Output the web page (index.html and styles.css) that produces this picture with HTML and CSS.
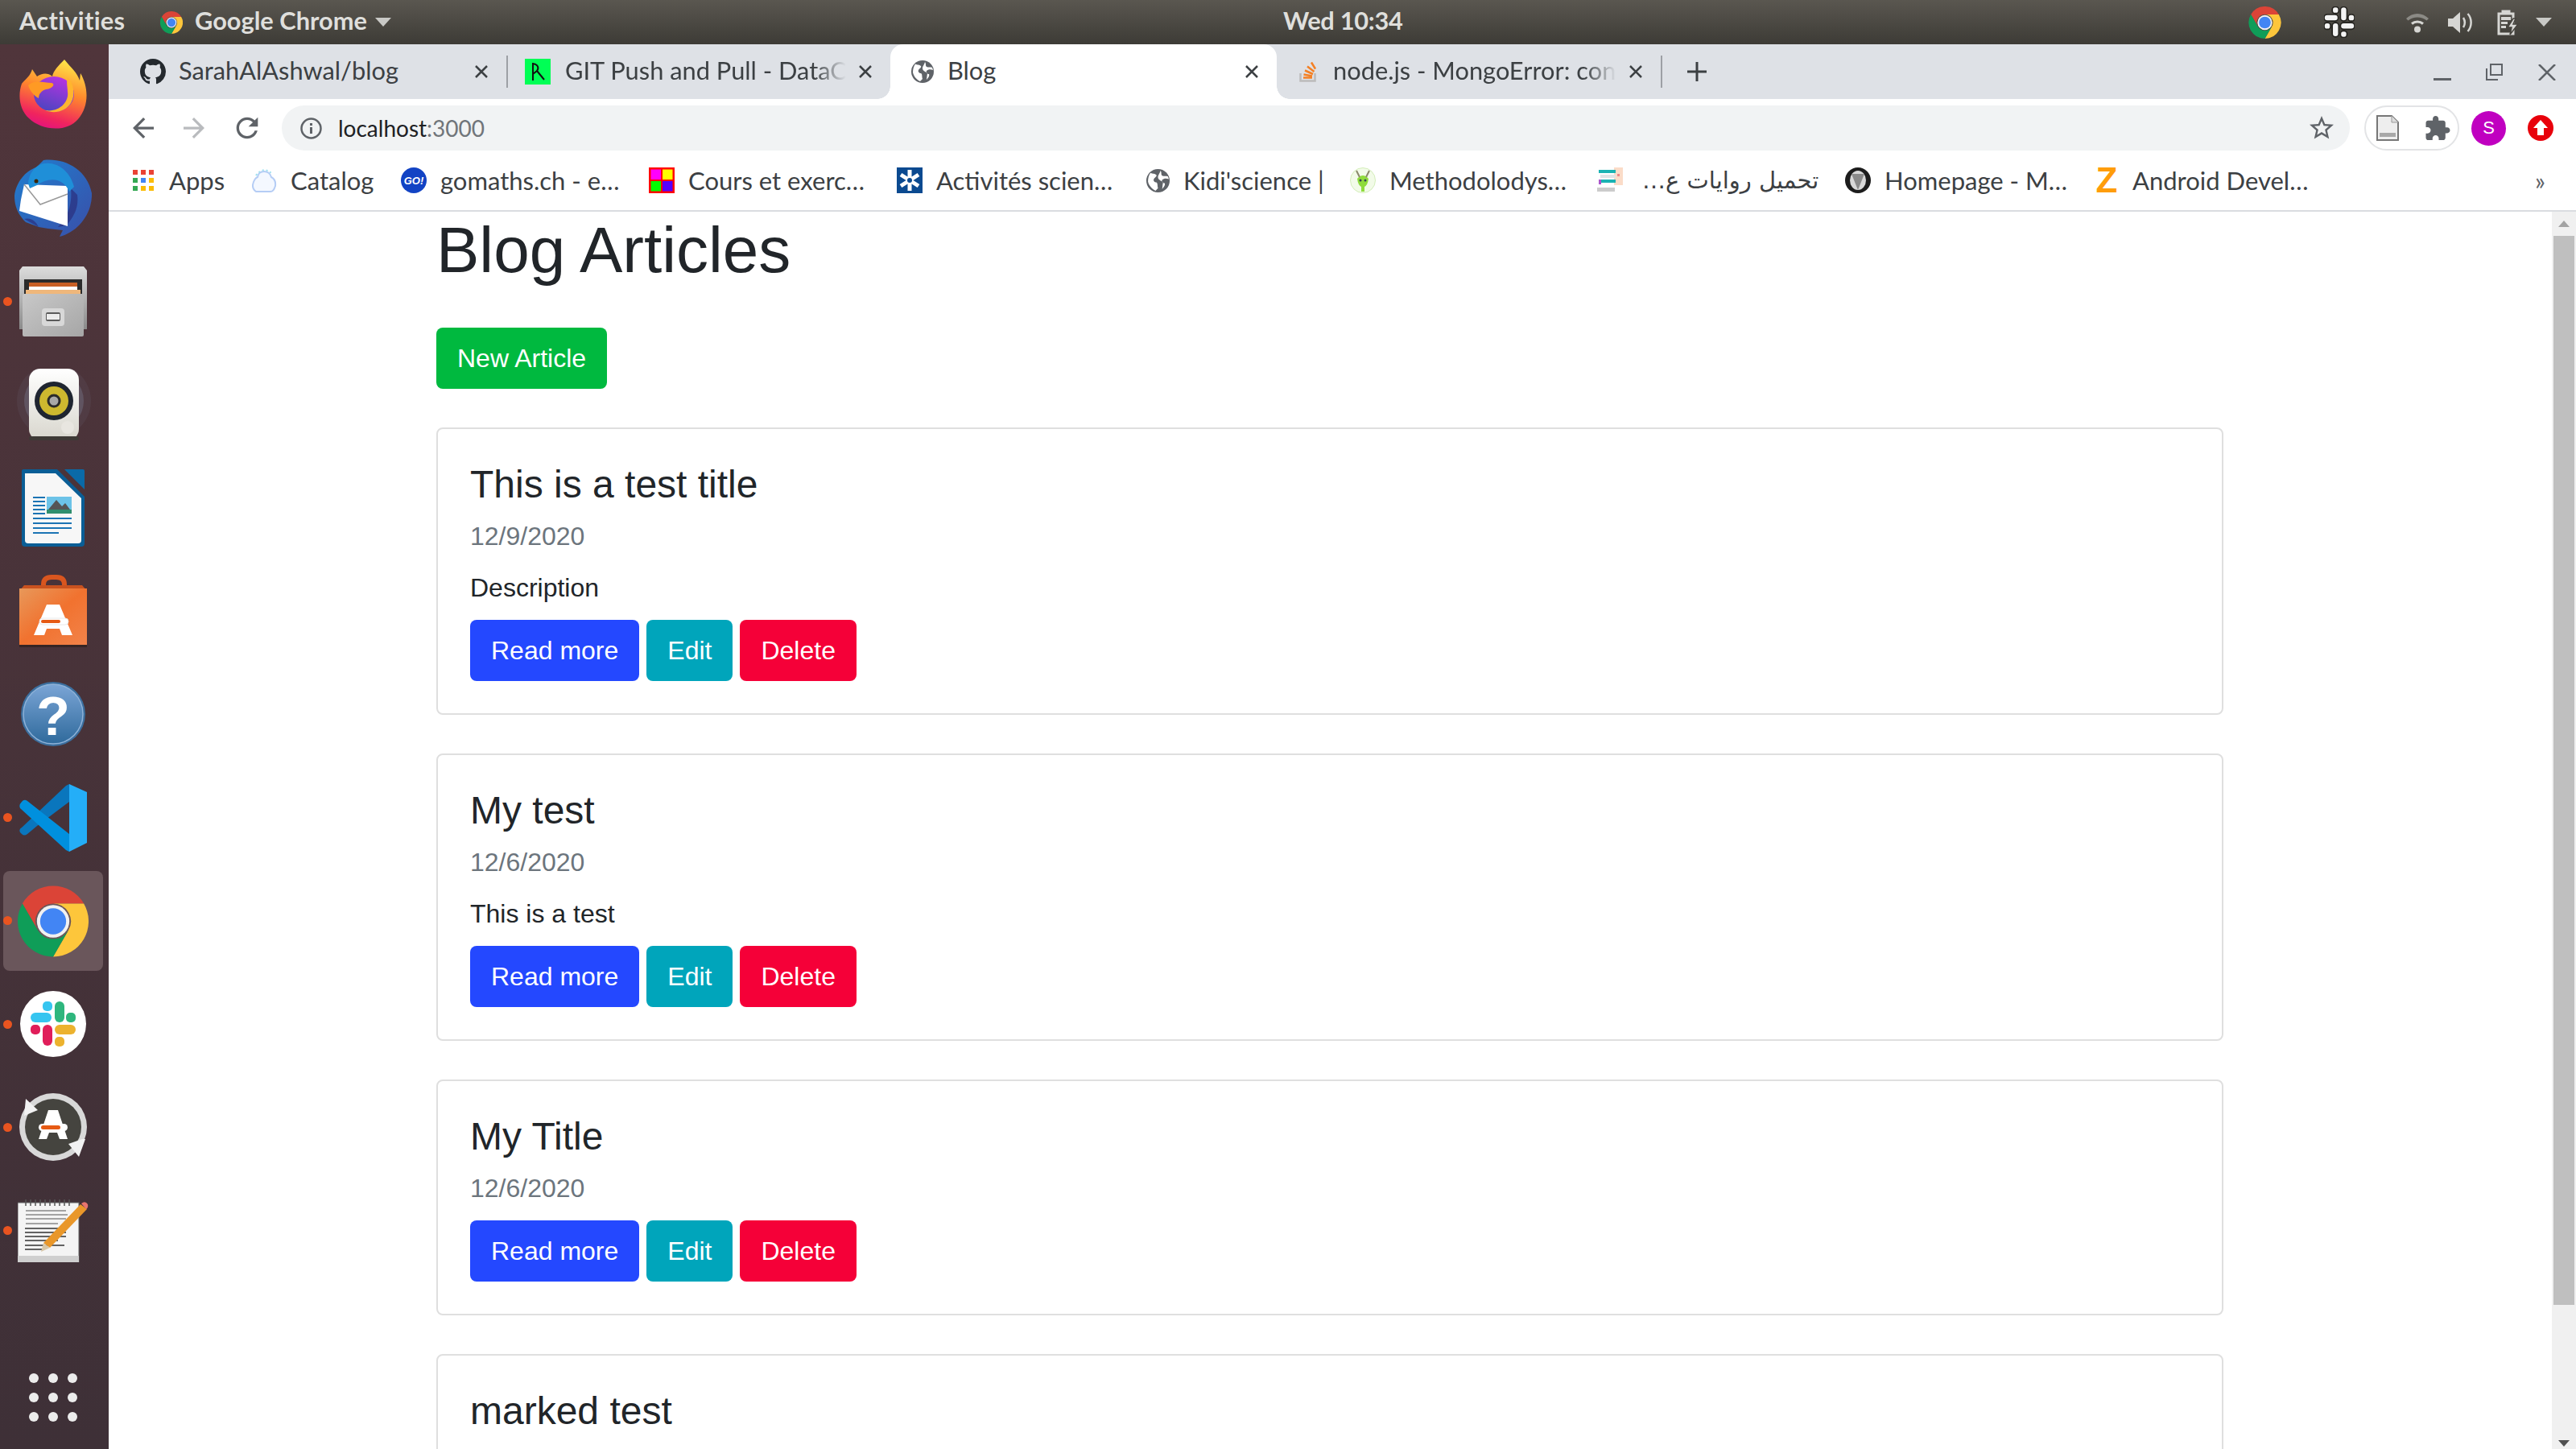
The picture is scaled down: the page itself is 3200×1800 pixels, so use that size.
FILE: index.html
```html
<!DOCTYPE html>
<html lang="en">
<head>
<meta charset="utf-8">
<title>Blog</title>
<link rel="stylesheet" href="styles.css">
</head>
<body>
<svg class="defs" width="0" height="0">
  <symbol id="chrome" viewBox="0 0 48 48">
    <path fill="#db4437" d="M3.2 12A24 24 0 0 1 44.8 12H24A12 12 0 0 0 13.6 30Z"/>
    <path fill="#fdc63b" d="M44.8 12A24 24 0 0 1 24 48L34.4 30A12 12 0 0 0 24 12Z"/>
    <path fill="#0f9d58" d="M24 48A24 24 0 0 1 3.2 12L13.6 30A12 12 0 0 0 34.4 30Z"/>
    <circle cx="24" cy="24" r="11" fill="#f1f1f1"/>
    <circle cx="24" cy="24" r="8.8" fill="#4285f4"/>
  </symbol>
  <symbol id="globe" viewBox="0 0 28 28">
    <circle cx="14" cy="14" r="14" fill="#5f6368"/>
    <path fill="#fff" d="M5 4.500C8 6 10 5 12 7c1 2-2 3-3 5-1 2 1 4 3 4 2 1 1 4 2 7l-3 3C7 24 3 20 2 15c0-4 1-8 3-10.500zM17 2c2 3 0 4 2 6 2 1 5 0 7 1l1 3c-3-1-6-1-8 1-1 2 1 4 3 4 1 2-1 5-3 7l1-8c-2-2-6-3-6-6 0-3 2-4 3-8z"/>
  </symbol>
</svg>

<header class="topbar">
  <span class="tb-activities tb-text">Activities</span>
  <span class="tb-app">
    <svg class="tb-chrome" width="28" height="30"><use href="#chrome"/></svg>
    <span class="tb-appname tb-text">Google Chrome</span>
    <i class="tb-caret"></i>
  </span>
  <span class="tb-clock tb-text">Wed 10:34</span>
  <span class="tb-tray">
    <svg class="tray-chrome" width="41" height="40"><use href="#chrome"/></svg>
    <svg class="tray-slack" width="38" height="39" viewBox="13 13 56 56">
      <g fill="#f4f4f4" stroke="#24231f" stroke-width="2.500">
        <rect x="13" y="27" width="26" height="12" rx="6"/>
        <rect x="28" y="13" width="12" height="12" rx="5"/>
        <rect x="43" y="13" width="12" height="26" rx="6"/>
        <rect x="57" y="27" width="12" height="12" rx="5"/>
        <rect x="13" y="42" width="12" height="12" rx="5"/>
        <rect x="28" y="42" width="12" height="26" rx="6"/>
        <rect x="43" y="42" width="26" height="12" rx="6"/>
        <rect x="43" y="57" width="12" height="12" rx="5"/>
      </g>
    </svg>
    <svg class="tray-wifi" width="30" height="26" viewBox="0 0 30 26">
      <path fill="#8b8a85" d="M1 8C9 0 21 0 29 8l-2.500 2.500C20 5 10 5 3.500 10.500z"/>
      <path fill="none" stroke="#d6d6d3" stroke-width="3" d="M8 14.500c4-3.500 10-3.500 14 0"/>
      <circle cx="15" cy="21.500" r="4" fill="#d6d6d3"/>
    </svg>
    <svg class="tray-vol" width="31" height="28" viewBox="0 0 31 28">
      <path fill="#d6d6d3" d="M0 9h6l9-8v26l-9-8H0z"/>
      <path fill="none" stroke="#d6d6d3" stroke-width="2.500" d="M19 8c2.500 4 2.500 8 0 12M24.500 3c5.500 6 5.500 16 0 22"/>
    </svg>
    <svg class="tray-bat" width="28" height="32" viewBox="0 0 28 32">
      <path fill="none" stroke="#d6d6d3" stroke-width="3" d="M2 5h18v25H2zM7 5V2h8v3"/>
      <path fill="#d6d6d3" d="M5 9h12v4H5zM5 15h8v3H5zM5 20h6v3H5z"/>
      <path fill="#d6d6d3" stroke="#45433d" stroke-width="1.500" d="M20 11l-7 11h5l-2 9 10-13h-6l3-7z"/>
    </svg>
    <i class="tb-caret tb-caret-tray"></i>
  </span>
</header>

<div class="desk">
  <nav class="dock">
    <div class="dock-list">
      <div class="di">
        <svg width="84" height="87" viewBox="0 0 84 87">
          <defs>
            <linearGradient id="ff1" x1="0.700" y1="0" x2="0.400" y2="1"><stop offset="0" stop-color="#ffe94a"/><stop offset=".45" stop-color="#ff8a2c"/><stop offset=".85" stop-color="#f0245e"/><stop offset="1" stop-color="#e3147c"/></linearGradient>
            <linearGradient id="ff2" x1="0.700" y1="0" x2="0.300" y2="1"><stop offset="0" stop-color="#b833e1"/><stop offset="1" stop-color="#4a45c0"/></linearGradient>
          </defs>
          <path fill="url(#ff1)" d="M56 0C49 7 42 14 41 21 35 16 28 17 22 21L16 12C14 20 8 24 3 30-2 44 0 62 12 73 26 87 58 92 73 74 87 58 86 34 76 17L75 26C72 16 64 10 56 0Z"/>
          <ellipse cx="43" cy="43" rx="25" ry="22" fill="url(#ff2)"/>
          <path fill="#ff9a24" d="M11 32C19 24 31 29 40 29 45 30 42 36 33 37 27 39 24 43 24 48 17 44 13 38 11 32Z"/>
          <path fill="#ffb52e" d="M60 22C68 30 70 44 64 54 58 64 44 68 32 63 50 66 62 52 60 40 60 34 58 28 60 22Z"/>
        </svg>
      </div>
      <div class="di">
        <svg width="96" height="96" viewBox="0 0 96 96">
          <defs><linearGradient id="tb" x1="0" y1="0" x2="1" y2="1"><stop offset="0" stop-color="#1f7fd0"/><stop offset="1" stop-color="#3a4ea8"/></linearGradient></defs>
          <path fill="url(#tb)" d="M36 1C62-2 90 12 96 42 97 66 80 90 56 96L60 88 42 86 30 84 14 78C4 68 0 58 0 45 2 28 14 14 27 10Z"/>
          <path fill="#2b2f7e" d="M30 84L12 74C20 72 26 76 30 84ZM65 82C74 70 80 60 78 44L70 36C72 56 66 72 54 84Z" opacity=".7"/>
          <path fill="#fff" d="M12 31L66 33 66 83 6 64 8 50Z"/>
          <path fill="none" stroke="#9a9a9a" stroke-width="1.500" d="M12 31L32 56 66 43"/>
          <path fill="#1f8fd8" d="M17 30C18 16 28 3 44 5 58 6 70 18 74 34L68 40C60 22 42 22 28 32L19 36Z"/>
          <circle cx="27" cy="27" r="2.500" fill="#3b2505"/>
        </svg>
      </div>
      <div class="di">
        <i class="run-dot"></i>
        <svg width="84" height="87" viewBox="0 0 84 87">
          <defs>
            <linearGradient id="fl1" x1="0" y1="0" x2="0" y2="1"><stop offset="0" stop-color="#dcdcdc"/><stop offset="1" stop-color="#8a8a8a"/></linearGradient>
            <linearGradient id="fl2" x1="0" y1="0" x2="1" y2="1"><stop offset="0" stop-color="#c8c8c8"/><stop offset="1" stop-color="#a6a6a6"/></linearGradient>
          </defs>
          <path fill="url(#fl1)" d="M4 0H80L84 5V78H0V5Z"/>
          <rect x="6" y="16" width="72" height="20" fill="#2b2b2b"/>
          <path fill="#c85f24" d="M12 20H72V28H12Z"/>
          <rect x="12" y="25" width="60" height="4" fill="#fff"/>
          <rect x="8" y="29" width="68" height="5" fill="#efb77b"/>
          <rect x="4" y="34" width="76" height="53" rx="2" fill="url(#fl2)"/>
          <rect x="28" y="52" width="28" height="22" rx="4" fill="#d8d8d8"/>
          <rect x="33" y="57" width="18" height="11" rx="2" fill="#5a5a5a"/>
          <rect x="34" y="59" width="16" height="7" fill="#ececec"/>
        </svg>
      </div>
      <div class="di">
        <svg width="95" height="89" viewBox="0 0 95 89">
          <defs><linearGradient id="rb" x1="0" y1="0" x2="0" y2="1"><stop offset="0" stop-color="#fff"/><stop offset="1" stop-color="#d8d6cd"/></linearGradient></defs>
          <circle cx="48" cy="40" r="46" fill="#6d6a7c" opacity=".16"/>
          <circle cx="48" cy="40" r="37" fill="#8e9ab6" opacity=".25"/>
          <rect x="17" y="0" width="62" height="89" rx="14" fill="url(#rb)"/>
          <rect x="17" y="84" width="62" height="5" rx="2.500" fill="#3e3a36"/>
          <circle cx="48" cy="40" r="24" fill="#1f2530"/>
          <circle cx="48" cy="40" r="18" fill="#cdb82f"/>
          <circle cx="48" cy="40" r="8.500" fill="#2a2a2a"/>
          <circle cx="48" cy="40" r="5.500" fill="#a8a8a8"/>
          <circle cx="65" cy="73" r="8" fill="#e8e6e0"/>
        </svg>
      </div>
      <div class="di">
        <svg width="78" height="96" viewBox="0 0 78 96">
          <path fill="#0a5e96" d="M0 2Q0 0 2 0H44L78 34V92Q78 96 74 96H4Q0 96 0 92Z"/>
          <path fill="#f7f7f7" d="M4 5H42L74 36V88Q74 92 70 92H8Q4 92 4 88Z"/>
          <path fill="#0a6aa8" d="M53 0H76Q78 0 78 2V25Z"/>
          <g fill="#1b74b4">
            <rect x="14" y="34" width="15" height="2"/><rect x="14" y="39" width="15" height="2"/><rect x="14" y="44" width="15" height="2"/><rect x="14" y="49" width="15" height="2"/><rect x="14" y="54" width="15" height="2"/>
            <rect x="14" y="60" width="48" height="2"/><rect x="14" y="66" width="48" height="2"/><rect x="14" y="72" width="48" height="2"/><rect x="14" y="78" width="32" height="2"/>
          </g>
          <rect x="31" y="34" width="31" height="21" fill="#6cc3e8"/>
          <path fill="#555" d="M33 50L43 38 50 46 54 42 60 50Z"/>
          <rect x="31" y="50" width="31" height="5" fill="#2f8f6f"/>
        </svg>
      </div>
      <div class="di">
        <svg width="84" height="90" viewBox="0 0 84 90">
          <defs><linearGradient id="bag" x1="0" y1="0" x2="1" y2="1"><stop offset="0" stop-color="#e8985a"/><stop offset=".5" stop-color="#f1722f"/><stop offset="1" stop-color="#f2834a"/></linearGradient></defs>
          <path fill="none" stroke="#d9561f" stroke-width="6" d="M30 28V12Q30 3 40 3H46Q56 3 56 12V28"/>
          <path fill="#c9521f" d="M6 13H78L84 20H0Z"/>
          <rect x="0" y="17" width="84" height="70" fill="url(#bag)"/>
          <rect x="0" y="87" width="84" height="3" fill="#2a1c18" opacity=".6"/>
          <path fill="#fff" d="M34 37H50L66 75H53L50 67H34L31 75H18Z"/>
          <rect x="25" y="54" width="36" height="8" rx="4" fill="#fff" stroke="#e8e8e8"/>
          <rect x="27" y="56" width="24" height="4" rx="2" fill="#e65a14"/>
        </svg>
      </div>
      <div class="di">
        <svg width="80" height="80" viewBox="0 0 80 80">
          <defs><linearGradient id="hp" x1="0" y1="0" x2="0" y2="1"><stop offset="0" stop-color="#7ba5d6"/><stop offset="1" stop-color="#2f6a9c"/></linearGradient></defs>
          <circle cx="40" cy="40" r="40" fill="#3b6f9f"/>
          <circle cx="40" cy="40" r="37" fill="url(#hp)" stroke="#8fb2d8" stroke-width="1.500"/>
          <text class="help-q" x="40" y="66" text-anchor="middle">?</text>
        </svg>
      </div>
      <div class="di">
        <i class="run-dot"></i>
        <svg width="84" height="84" viewBox="0 0 84 84">
          <path fill="#0a76bd" d="M62 0V22L22 52 10 62Q6 65 3 62L1 60Q-1 56 3 54L58 2Z"/>
          <path fill="#0090de" d="M3 22Q6 18 10 21L62 62V84L58 82 1 30Q-1 26 3 22Z"/>
          <path fill="#24aef8" d="M62 0L84 10V73L62 84Z"/>
        </svg>
      </div>
      <div class="di di-active">
        <i class="run-dot"></i>
        <svg width="88" height="89"><use href="#chrome"/></svg>
      </div>
      <div class="di">
        <i class="run-dot"></i>
        <svg width="82" height="82" viewBox="0 0 82 82">
          <circle cx="41" cy="41" r="41" fill="#fff"/>
          <g>
            <rect x="13" y="27" width="26" height="12" rx="6" fill="#36c5f0"/>
            <rect x="28" y="13" width="12" height="12" rx="5" fill="#36c5f0"/>
            <rect x="43" y="13" width="12" height="26" rx="6" fill="#2eb67d"/>
            <rect x="57" y="27" width="12" height="12" rx="5" fill="#2eb67d"/>
            <rect x="13" y="42" width="12" height="12" rx="5" fill="#e01e5a"/>
            <rect x="28" y="42" width="12" height="26" rx="6" fill="#e01e5a"/>
            <rect x="43" y="42" width="26" height="12" rx="6" fill="#ecb22e"/>
            <rect x="43" y="57" width="12" height="12" rx="5" fill="#ecb22e"/>
          </g>
        </svg>
      </div>
      <div class="di">
        <i class="run-dot"></i>
        <svg width="84" height="87" viewBox="0 0 84 87">
          <circle cx="42" cy="43" r="42" fill="#d8d8d8"/>
          <circle cx="42" cy="43" r="35" fill="#45443f"/>
          <path fill="#f2f2f2" d="M6 29L8 8 23 22ZM78 58L82 58 74 80 61 64Z"/>
          <path fill="#fff" d="M36 22H48L60 58H50L47 50H37L34 58H24Z"/>
          <rect x="24" y="39" width="36" height="9" rx="4.500" fill="#fff"/>
          <rect x="27" y="41" width="24" height="5" rx="2.500" fill="#e65a14"/>
        </svg>
      </div>
      <div class="di">
        <i class="run-dot"></i>
        <svg width="88" height="78" viewBox="0 0 88 78">
          <rect x="0" y="4" width="76" height="74" fill="#f4f4f4" stroke="#666"/>
          <rect x="0" y="70" width="76" height="8" fill="#cfcfcf"/>
          <g stroke="#555" stroke-width="1.500">
            <path d="M10 0v8M16 0v8M22 0v8M28 0v8M34 0v8M40 0v8M46 0v8M52 0v8M58 0v8M64 0v8"/>
          </g>
          <g stroke="#888" stroke-width="1.500">
            <path d="M10 14H60M10 19H62M10 24H60M10 30H50"/>
          </g>
          <g stroke="#333" stroke-width="1.500">
            <path d="M9 36H58M9 41H60M9 46H60M9 51H50M9 57H58M9 62H30"/>
          </g>
          <path fill="#e9972a" d="M78 6L86 12 40 60 32 54Z"/>
          <path fill="#e8756f" d="M79 5Q84 1 87 6 88 10 85 12Z"/>
          <path fill="#d8c7a8" d="M32 54L40 60 29 65Z"/>
        </svg>
      </div>
    </div>
    <div class="dock-grid">
      <i></i><i></i><i></i><i></i><i></i><i></i><i></i><i></i><i></i>
    </div>
  </nav>

  <main class="browser">
    <div class="tabstrip">
      <div class="tab">
        <svg class="fav" width="32" height="32" viewBox="0 0 16 16"><path fill="#24292e" d="M8 0C3.580 0 0 3.580 0 8c0 3.540 2.290 6.530 5.470 7.590.4.070.55-.17.55-.38 0-.19-.01-.82-.01-1.490-2.010.37-2.530-.49-2.690-.94-.09-.23-.48-.94-.82-1.130-.28-.15-.68-.52-.01-.53.63-.01 1.080.58 1.230.82.72 1.210 1.870.87 2.330.66.07-.52.28-.87.51-1.070-1.780-.2-3.640-.89-3.640-3.950 0-.87.31-1.590.82-2.150-.08-.2-.36-1.020.08-2.120 0 0 .67-.21 2.200.82.64-.18 1.320-.27 2-.27.68 0 1.360.09 2 .27 1.530-1.040 2.200-.82 2.200-.82.44 1.100.16 1.920.08 2.120.51.56.82 1.270.82 2.150 0 3.070-1.870 3.750-3.650 3.950.29.25.54.73.54 1.480 0 1.070-.01 1.930-.01 2.200 0 .21.15.46.55.38A8.013 8.013 0 0016 8c0-4.420-3.580-8-8-8z"/></svg>
        <span class="tab-title">SarahAlAshwal/blog</span>
        <svg class="tab-x" width="16" height="16" viewBox="0 0 16 16"><path d="M1 1l14 14M15 1L1 15"/></svg>
      </div>
      <i class="tab-sep"></i>
      <div class="tab tab-b">
        <svg class="fav" width="32" height="32" viewBox="0 0 32 32"><rect width="32" height="32" fill="#0f5"/><path fill="none" stroke="#111" stroke-width="2" d="M10 5v22M10 6c6 1 8 5 5 9l-5 4M15 15l9 11"/></svg>
        <span class="tab-title tab-fade">GIT Push and Pull - DataC</span>
        <svg class="tab-x" width="16" height="16" viewBox="0 0 16 16"><path d="M1 1l14 14M15 1L1 15"/></svg>
      </div>
      <div class="tab tab-active">
        <svg class="fav" width="28" height="28"><use href="#globe"/></svg>
        <span class="tab-title">Blog</span>
        <svg class="tab-x" width="16" height="16" viewBox="0 0 16 16"><path d="M1 1l14 14M15 1L1 15"/></svg>
      </div>
      <div class="tab tab-d">
        <svg class="fav" width="21" height="26" viewBox="0 0 21 26">
          <path fill="none" stroke="#bcbbbb" stroke-width="2.500" d="M1.500 15v9.500h18V15"/>
          <path fill="none" stroke="#f48024" stroke-width="2.500" d="M5 20.500h11M5.500 16.500l10.500 2M7 11.500l10 4.500M10 6.500l8.500 6.500M15 1.500l5 8"/>
        </svg>
        <span class="tab-title tab-fade">node.js - MongoError: con</span>
        <svg class="tab-x" width="16" height="16" viewBox="0 0 16 16"><path d="M1 1l14 14M15 1L1 15"/></svg>
      </div>
      <i class="tab-sep"></i>
      <svg class="tab-plus" width="24" height="24" viewBox="0 0 24 24"><path d="M12 0v24M0 12h24"/></svg>
      <div class="winctl">
        <svg width="22" height="3" viewBox="0 0 22 3"><rect width="22" height="3" fill="#5f6368"/></svg>
        <svg class="win-restore" width="21" height="21" viewBox="0 0 21 21"><path fill="none" stroke="#5f6368" stroke-width="2" d="M6 1h14v13H6zM1 6v14h14"/></svg>
        <svg class="win-close" width="22" height="20" viewBox="0 0 22 20"><path stroke="#5f6368" stroke-width="2.500" d="M1 0l20 20M21 0L1 20"/></svg>
      </div>
    </div>

    <div class="toolbar">
      <svg class="tool" width="26" height="26" viewBox="4 4 16 16"><path fill="#5f6368" d="M20 11H7.830l5.590-5.590L12 4l-8 8 8 8 1.410-1.410L7.830 13H20v-2z"/></svg>
      <svg class="tool" width="26" height="26" viewBox="4 4 16 16"><path fill="#b9bbbe" d="M4 11h12.170l-5.590-5.590L12 4l8 8-8 8-1.410-1.410L16.170 13H4v-2z"/></svg>
      <svg class="tool" width="30" height="30" viewBox="3 3 18 18"><path fill="#5f6368" d="M17.650 6.350C16.200 4.900 14.210 4 12 4c-4.420 0-7.990 3.580-7.990 8s3.570 8 7.990 8c3.730 0 6.840-2.550 7.730-6h-2.080c-.82 2.330-3.040 4-5.650 4-3.310 0-6-2.690-6-6s2.690-6 6-6c1.660 0 3.140.69 4.220 1.780L13 11h7V4l-2.350 2.350z"/></svg>
      <div class="omni">
        <svg class="omni-info" width="27" height="27" viewBox="0 0 27 27"><circle cx="13.500" cy="13.500" r="12" fill="none" stroke="#5f6368" stroke-width="2.500"/><rect x="12" y="12" width="3" height="8" fill="#5f6368"/><rect x="12" y="7" width="3" height="3" fill="#5f6368"/></svg>
        <span class="omni-url">localhost<span class="omni-port">:3000</span></span>
        <svg class="omni-star" width="30" height="30" viewBox="2 2 20 20"><path fill="#5f6368" d="M22 9.240l-7.190-.62L12 2 9.190 8.630 2 9.240l5.460 4.730L5.820 21 12 17.270 18.180 21l-1.630-7.030L22 9.240zM12 15.400l-3.760 2.270 1-4.280-3.320-2.880 4.380-.38L12 6.100l1.710 4.040 4.380.38-3.320 2.880 1 4.280L12 15.400z"/></svg>
      </div>
      <div class="ext-pill">
        <svg width="28" height="32" viewBox="0 0 28 32"><path fill="#eee" stroke="#777" stroke-width="2" d="M1 1H19L27 9V31H1Z"/><path fill="#ddd" stroke="#999" d="M19 1V9H27"/><rect x="4" y="22" width="20" height="5" fill="#a8a8a8"/></svg>
        <svg width="31" height="30" viewBox="2 1 21 21"><path fill="#5f6368" d="M20.500 11H19V7c0-1.100-.9-2-2-2h-4V3.500C13 2.120 11.880 1 10.500 1S8 2.120 8 3.500V5H4c-1.100 0-1.990.9-1.990 2v3.800H3.500c1.490 0 2.700 1.210 2.700 2.700s-1.210 2.700-2.700 2.700H2V20c0 1.100.9 2 2 2h3.800v-1.500c0-1.490 1.210-2.700 2.700-2.700 1.490 0 2.700 1.210 2.700 2.700V22H17c1.100 0 2-.9 2-2v-4h1.500c1.380 0 2.500-1.120 2.500-2.500S21.880 11 20.500 11z"/></svg>
      </div>
      <span class="avatar">S</span>
      <svg class="update" width="32" height="32" viewBox="0 0 32 32"><circle cx="16" cy="16" r="16" fill="#e8000b"/><path fill="#fff" d="M16 6l9 10h-5v9h-8v-9H7z"/></svg>
    </div>

    <div class="bookmarks">
      <div class="bm bm-apps">
        <svg width="26" height="26" viewBox="0 0 26 26">
          <rect width="6" height="6" fill="#ea4335"/><rect x="10" width="6" height="6" fill="#ea4335"/><rect x="20" width="6" height="6" fill="#ea4335"/>
          <rect y="10" width="6" height="6" fill="#34a853"/><rect x="10" y="10" width="6" height="6" fill="#4285f4"/><rect x="20" y="10" width="6" height="6" fill="#fbbc05"/>
          <rect y="20" width="6" height="6" fill="#34a853"/><rect x="10" y="20" width="6" height="6" fill="#fbbc05"/><rect x="20" y="20" width="6" height="6" fill="#fbbc05"/>
        </svg>
        <span>Apps</span>
      </div>
      <div class="bm bm-catalog">
        <svg width="32" height="32" viewBox="0 0 32 32"><path fill="#f4f8ff" stroke="#b5cdf5" stroke-width="2" d="M6 30Q0 26 3 18 5 13 8 12 9 5 16 5 23 5 25 12 31 15 30 23 28 30 24 30Z"/><path fill="none" stroke="#9fe0ef" stroke-width="2" stroke-dasharray="2 3" d="M6 10Q16 -3 27 9"/></svg>
        <span>Catalog</span>
      </div>
      <div class="bm bm-go">
        <svg width="32" height="32" viewBox="0 0 32 32"><circle cx="16" cy="16" r="16" fill="#1243c4"/><text class="go-text" x="16" y="21" text-anchor="middle">GO!</text></svg>
        <span>gomaths.ch - e…</span>
      </div>
      <div class="bm bm-cours">
        <svg class="ic-tall" width="32" height="32" viewBox="0 0 32 32"><rect width="32" height="32" fill="#f00"/><rect x="2.500" y="2.500" width="12.500" height="12.500" fill="#f0f"/><rect x="17" y="2.500" width="12.500" height="12.500" fill="#ff0"/><rect x="2.500" y="17" width="12.500" height="12.500" fill="#0f0"/><rect x="17" y="17" width="12.500" height="12.500" fill="#50f"/></svg>
        <span>Cours et exerc…</span>
      </div>
      <div class="bm bm-act">
        <svg class="ic-tall" width="32" height="32" viewBox="0 0 32 32"><rect width="32" height="32" fill="#0b4a90"/><path stroke="#fff" stroke-width="5" d="M16 3v26M5 9l22 14M27 9L5 23"/><circle cx="16" cy="16" r="3" fill="#0b4a90"/></svg>
        <span>Activités scien…</span>
      </div>
      <div class="bm bm-kidi">
        <svg width="29" height="29"><use href="#globe"/></svg>
        <span>Kidi'science |</span>
      </div>
      <div class="bm bm-meth">
        <svg class="ic-tall" width="32" height="32" viewBox="0 0 32 32"><circle cx="16" cy="16" r="15.500" fill="#f2fbe8" stroke="#d4eeba"/><path fill="#8fdc3c" d="M9 14Q16 6 23 14 22 22 18 24V30H14V24Q10 22 9 14Z"/><path stroke="#8a8a6a" stroke-width="2" d="M12 12L8 4M20 12L24 4"/><circle cx="13" cy="16" r="1.500" fill="#345"/><circle cx="19" cy="16" r="1.500" fill="#345"/></svg>
        <span>Methodolodys…</span>
      </div>
      <div class="bm bm-ar">
        <svg class="ic-tall" width="33" height="32" viewBox="0 0 33 32"><rect width="33" height="32" fill="#fff"/><rect x="22" y="0" width="11" height="22" fill="#fbdcc8"/><rect x="3" y="3" width="21" height="4" fill="#1bb3b3"/><rect x="5" y="9" width="19" height="4" fill="#dfe4e6"/><rect x="3" y="15" width="21" height="4" fill="#1bb3b3"/><rect x="26" y="8" width="3" height="3" fill="#e88"/><rect x="3" y="15" width="3" height="6" fill="#a5c"/><rect x="1" y="25" width="22" height="5" fill="#ccc"/></svg>
        <span class="bm-rtl" dir="rtl" lang="ar">تحميل روايات ع…</span>
      </div>
      <div class="bm bm-home">
        <svg class="ic-tall" width="32" height="32" viewBox="0 0 32 32"><ellipse cx="16" cy="16" rx="16" ry="16" fill="#1c1c1c"/><ellipse cx="16" cy="16" rx="10" ry="12" fill="#d8d8d8"/><path fill="#8a8a8a" d="M8 8H24L16 28Z"/></svg>
        <span>Homepage - M…</span>
      </div>
      <div class="bm bm-z">
        <span class="z-ico">Z</span>
        <span>Android Devel…</span>
      </div>
      <span class="bm-more">»</span>
    </div>

    <div class="viewport">
      <div class="page">
        <h1 class="title">Blog Articles</h1>
        <a class="btn btn-success">New Article</a>

        <article class="card">
          <h4 class="card-title">This is a test title</h4>
          <div class="card-date">12/9/2020</div>
          <div class="card-text">Description</div>
          <div class="card-actions"><a class="btn btn-primary">Read more</a><a class="btn btn-info">Edit</a><a class="btn btn-danger">Delete</a></div>
        </article>

        <article class="card">
          <h4 class="card-title">My test</h4>
          <div class="card-date">12/6/2020</div>
          <div class="card-text">This is a test</div>
          <div class="card-actions"><a class="btn btn-primary">Read more</a><a class="btn btn-info">Edit</a><a class="btn btn-danger">Delete</a></div>
        </article>

        <article class="card">
          <h4 class="card-title">My Title</h4>
          <div class="card-date">12/6/2020</div>
          <div class="card-actions"><a class="btn btn-primary">Read more</a><a class="btn btn-info">Edit</a><a class="btn btn-danger">Delete</a></div>
        </article>

        <article class="card">
          <h4 class="card-title">marked test</h4>
        </article>
      </div>
      <div class="scrollbar">
        <div class="sb-btn"><i class="sb-up"></i></div>
        <div class="sb-thumb"></div>
        <div class="sb-btn sb-btn-end"><i class="sb-down"></i></div>
      </div>
    </div>
  </main>
</div>
</body>
</html>
```

FILE: styles.css
```css
* { box-sizing: border-box; }
html, body { margin: 0; padding: 0; height: 100%; }
body {
  width: 3200px;
  height: 1800px;
  overflow: hidden;
  display: flex;
  flex-direction: column;
  font-family: Lato, "Noto Sans", sans-serif;
  background: #fff;
}
.defs { position: absolute; }
svg { display: block; flex: none; }
i { display: block; }

/* desktop top bar */
.topbar {
  height: 55px;
  flex: none;
  display: flex;
  align-items: center;
  position: relative;
  background: linear-gradient(#5a5750, #3d3b36);
  color: #dfdfdc;
  font-size: 30.800px;
  font-weight: 700;
  padding-left: 24px;
}
.tb-text { padding-bottom: 4px; }
.tb-activities { width: 175px; letter-spacing: .3px; }
.tb-app { display: flex; align-items: center; }
.tb-appname { margin-left: 15px; }
.tb-caret {
  width: 0; height: 0;
  margin-left: 10px;
  border-left: 10px solid transparent;
  border-right: 10px solid transparent;
  border-top: 11px solid #c9c9c6;
}
.tb-clock { position: absolute; left: 1594px; top: 7px; letter-spacing: -.3px; }
.tb-tray { position: absolute; left: 2793px; top: 0; height: 55px; display: flex; align-items: center; }
.tray-slack { margin-left: 53px; }
.tray-wifi { margin-left: 63px; }
.tray-vol { margin-left: 23px; }
.tray-bat { margin-left: 30px; }
.tb-caret-tray { margin-left: 20px; }

.desk { flex: 1; display: flex; min-height: 0; }

/* dock */
.dock {
  width: 135px;
  flex: none;
  display: flex;
  flex-direction: column;
  background: linear-gradient(#50353b, #3e3037);
}
.dock-list { display: flex; flex-direction: column; margin-top: -1.500px; }
.di {
  height: 128.300px;
  width: 132px;
  flex: none;
  position: relative;
  display: flex;
  align-items: center;
  justify-content: center;
}
.di-active::before {
  content: "";
  position: absolute;
  left: 4px;
  top: 2px;
  width: 124px;
  height: 124px;
  border-radius: 8px;
  background: #6a565b;
}
.di-active svg { position: relative; }
.run-dot {
  position: absolute;
  left: 4px;
  top: 58.500px;
  width: 11px;
  height: 11px;
  border-radius: 50%;
  background: #e95420;
  z-index: 1;
}
.help-q { font: 700 68px "Liberation Sans", sans-serif; fill: #fff; }
.dock-grid {
  margin-top: auto;
  margin-bottom: 34px;
  margin-left: 36px;
  width: 60px;
  display: grid;
  grid-template-columns: repeat(3, 12px);
  grid-auto-rows: 12px;
  gap: 12px;
}
.dock-grid i { border-radius: 50%; background: #ececec; }

/* browser */
.browser { flex: 1; min-width: 0; display: flex; flex-direction: column; }
.tabstrip {
  height: 68px;
  flex: none;
  display: flex;
  align-items: center;
  background: #dee1e6;
  padding-left: 15px;
}
.tab {
  width: 479px;
  height: 68px;
  flex: none;
  display: flex;
  align-items: center;
  padding-left: 24px;
  color: #3c4043;
  font-size: 30.800px;
  position: relative;
}
.tab-b { width: 475px; padding-left: 21px; }
.tab-active {
  width: 480px;
  padding-left: 26px;
  background: #fff;
  border-radius: 16px 16px 0 0;
}
.tab-active::before, .tab-active::after {
  content: "";
  position: absolute;
  bottom: 0;
  width: 16px;
  height: 16px;
}
.tab-active::before { left: -16px; background: radial-gradient(circle at 0 0, transparent 15.500px, #fff 16px); }
.tab-active::after { right: -16px; background: radial-gradient(circle at 100% 0, transparent 15.500px, #fff 16px); }
.tab-d { width: 477px; padding-left: 28px; }
.tab-title {
  flex: 1;
  min-width: 0;
  margin-left: 16px;
  margin-right: 16px;
  padding-bottom: 3px;
  white-space: nowrap;
}
.tab-fade {
  -webkit-mask-image: linear-gradient(90deg, #000 calc(100% - 40px), transparent 100%);
  mask-image: linear-gradient(90deg, #000 calc(100% - 40px), transparent 100%);
}
.tab-d .tab-title { margin-left: 21px; }
.tab-b .tab-title { margin-left: 18px; }
.tab-active .tab-title { margin-left: 17px; }
.tab-x { margin-right: 23px; fill: none; stroke: #3c4043; stroke-width: 2.500; }
.tab-sep { width: 2px; height: 40px; background: #9da0a5; flex: none; }
.tab-plus { margin-left: 31px; fill: none; stroke: #3c4043; stroke-width: 3; }
.winctl { margin-left: auto; display: flex; align-items: flex-end; padding-right: 25px; height: 21px; }
.win-restore { margin-left: 43px; }
.win-close { margin-left: 44px; }

.toolbar {
  height: 64px;
  flex: none;
  display: flex;
  align-items: center;
  background: #fff;
  padding: 8px 0 0 30px;
}
.tool { margin-right: 37px; }
.toolbar .tool:nth-child(2) { margin-right: 38px; }
.toolbar .tool:nth-child(3) { margin-right: 28px; }
.omni {
  width: 2569px;
  height: 56px;
  flex: none;
  display: flex;
  align-items: center;
  padding: 0 20px 0 23px;
  border-radius: 28px;
  background: #f1f3f4;
  font-size: 28px;
}
.omni-url { margin-left: 20px; color: #202124; }
.omni-port { color: #70757a; }
.omni-star { margin-left: auto; }
.ext-pill {
  width: 118px;
  height: 56px;
  margin-left: 18px;
  flex: none;
  display: flex;
  align-items: center;
  gap: 33px;
  padding-left: 13px;
  border: 2px solid #e3e4e6;
  border-radius: 28px;
}
.avatar {
  width: 43px;
  height: 43px;
  margin-left: 15px;
  flex: none;
  display: flex;
  align-items: center;
  justify-content: center;
  border-radius: 50%;
  background: #c000c0;
  color: #fff;
  font: 22px "Liberation Sans", sans-serif;
}
.update { margin-left: 27px; }

.bookmarks {
  height: 76px;
  flex: none;
  display: flex;
  align-items: center;
  padding-left: 30px;
  background: #fff;
  border-bottom: 2px solid #dadce0;
  color: #3c4043;
  font-size: 31px;
}
.bm { flex: none; display: flex; align-items: center; gap: 17px; white-space: nowrap; }
.bm-apps { width: 147px; gap: 19px; }
.bm-catalog { width: 186px; }
.bm-go { width: 308px; }
.bm-cours { width: 308px; }
.bm-act { width: 310px; }
.bm-kidi { width: 253px; }
.bm-meth { width: 306px; }
.bm-ar { width: 309px; gap: 24px; }
.bm-home { width: 310px; }
.bm-z { width: 547px; }
.bm-rtl { font-family: "DejaVu Sans", sans-serif; font-size: 29px; }
.bm-more { font-size: 30px; color: #5f6368; }
.go-text { font: italic 700 13px "Liberation Sans", sans-serif; fill: #fff; }
.z-ico {
  width: 30px;
  flex: none;
  text-align: center;
  color: #ff9d0a;
  font: 700 44px/40px "Liberation Sans", sans-serif;
}

/* page */
.viewport { flex: 1; min-height: 0; display: flex; overflow: hidden; }
.page {
  flex: 1;
  min-width: 0;
  height: 100%;
  overflow: hidden;
  padding-left: 407px;
  font-family: "Liberation Sans", Arial, sans-serif;
  color: #212529;
}
.title {
  margin: 0 0 48px;
  font-size: 80px;
  font-weight: 400;
  line-height: 96px;
}
.btn {
  display: inline-block;
  height: 76px;
  padding: 14px 26px;
  border-radius: 8px;
  color: #fff;
  font-size: 32px;
  line-height: 48px;
  white-space: nowrap;
}
.btn-success { background: #00b93f; }
.btn-primary { background: #2448ff; }
.btn-info { background: #00a5bb; }
.btn-danger { background: #f50038; }
.card {
  width: 2220px;
  margin-top: 48px;
  padding: 40px;
  border: 2px solid #dfdfdf;
  border-radius: 8px;
}
.card-title {
  margin: 0 0 16px;
  font-size: 48px;
  font-weight: 400;
  line-height: 57.600px;
}
.card-date {
  margin-bottom: 21px;
  color: #6c757d;
  font-size: 32px;
  line-height: 38.400px;
}
.card-text {
  margin-bottom: 16px;
  font-size: 32px;
  line-height: 48px;
}
.card-actions { display: flex; gap: 9px; }

/* scrollbar */
.scrollbar {
  width: 30px;
  flex: none;
  display: flex;
  flex-direction: column;
  align-items: center;
  background: #f0f0f0;
}
.sb-btn { height: 30px; flex: none; display: flex; align-items: center; justify-content: center; }
.sb-btn-end { margin-top: auto; padding-top: 15px; }
.sb-up { width: 0; height: 0; border-left: 7px solid transparent; border-right: 7px solid transparent; border-bottom: 8px solid #a3a3a3; }
.sb-down { width: 0; height: 0; border-left: 7px solid transparent; border-right: 7px solid transparent; border-top: 8px solid #505050; }
.sb-thumb { width: 26px; height: 1328px; background: #bfbfbf; }
```
